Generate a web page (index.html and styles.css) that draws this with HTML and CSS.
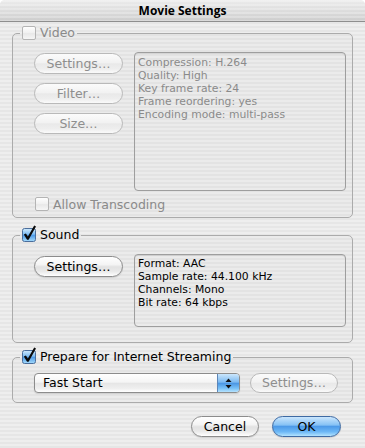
FILE: index.html
```html
<!DOCTYPE html>
<html>
<head>
<meta charset="utf-8">
<title>Movie Settings</title>
<link rel="stylesheet" href="styles.css">
</head>
<body>
<div class="window">
  <div class="titlebar">Movie Settings</div>
  <div class="content">
    <fieldset class="group">
      <legend class="legend is-disabled"><span class="cb cb-off"></span><span>Video</span></legend>
      <div class="group-body video-body">
        <div class="btn-col">
          <button class="btn btn-disabled">Settings…</button>
          <button class="btn btn-disabled">Filter…</button>
          <button class="btn btn-disabled">Size…</button>
        </div>
        <div class="info info-video is-disabled">
          <div class="info-line">Compression: H.264</div>
          <div class="info-line">Quality: High</div>
          <div class="info-line">Key frame rate: 24</div>
          <div class="info-line">Frame reordering: yes</div>
          <div class="info-line">Encoding mode: multi-pass</div>
        </div>
        <label class="check-row is-disabled"><span class="cb cb-off"></span><span>Allow Transcoding</span></label>
      </div>
    </fieldset>

    <fieldset class="group group-sound">
      <legend class="legend">
        <svg class="cb-on" width="14" height="14" viewBox="0 0 14 14" overflow="visible">
          <defs><linearGradient id="cbg1" x1="0" y1="0" x2="0" y2="1"><stop offset="0" stop-color="#d2ebfd"/><stop offset="0.45" stop-color="#7dbcf2"/><stop offset="0.5" stop-color="#4a98e6"/><stop offset="1" stop-color="#a6dcfc"/></linearGradient></defs>
          <rect x="0.5" y="0.5" width="13" height="13" rx="2" fill="url(#cbg1)" stroke="#4b6e9c"/>
          <path d="M1.8 6.6 L3.9 5.4 L5.9 8.6 L12.2 -2.6 L14 -1.6 L6.6 11.8 L5.1 11.8 Z" fill="#0a0a0a"/>
        </svg>
        <span>Sound</span>
      </legend>
      <div class="group-body sound-body">
        <div class="btn-col">
          <button class="btn">Settings…</button>
        </div>
        <div class="info info-sound">
          <div class="info-line">Format: AAC</div>
          <div class="info-line">Sample rate: 44.100 kHz</div>
          <div class="info-line">Channels: Mono</div>
          <div class="info-line">Bit rate: 64 kbps</div>
        </div>
      </div>
    </fieldset>

    <fieldset class="group group-stream">
      <legend class="legend">
        <svg class="cb-on" width="14" height="14" viewBox="0 0 14 14" overflow="visible">
          <defs><linearGradient id="cbg2" x1="0" y1="0" x2="0" y2="1"><stop offset="0" stop-color="#d2ebfd"/><stop offset="0.45" stop-color="#7dbcf2"/><stop offset="0.5" stop-color="#4a98e6"/><stop offset="1" stop-color="#a6dcfc"/></linearGradient></defs>
          <rect x="0.5" y="0.5" width="13" height="13" rx="2" fill="url(#cbg2)" stroke="#4b6e9c"/>
          <path d="M1.8 6.6 L3.9 5.4 L5.9 8.6 L12.2 -2.6 L14 -1.6 L6.6 11.8 L5.1 11.8 Z" fill="#0a0a0a"/>
        </svg>
        <span>Prepare for Internet Streaming</span>
      </legend>
      <div class="group-body stream-body">
        <div class="popup">
          <span class="popup-label">Fast Start</span>
          <span class="popup-arrows">
            <svg width="7" height="11" viewBox="0 0 7 11"><path d="M3.5 0.5 L6.5 4 L0.5 4 Z" fill="#111"/><path d="M0.5 7 L6.5 7 L3.5 10.5 Z" fill="#111"/></svg>
          </span>
        </div>
        <button class="btn btn-disabled btn-stream">Settings…</button>
      </div>
    </fieldset>
  </div>
  <div class="actions">
    <button class="btn btn-cancel">Cancel</button>
    <button class="btn btn-ok">OK</button>
  </div>
</div>
</body>
</html>
```
FILE: styles.css
```css
html, body {
  margin: 0;
  padding: 0;
  background: #ffffff;
}

body {
  font-family: "DejaVu Sans", "Open Sans", sans-serif;
  font-size: 12.5px;
  color: #000;
}

.window {
  width: 365px;
  height: 448px;
  overflow: hidden;
  display: flex;
  flex-direction: column;
  border-radius: 5px 5px 0 0;
  background: repeating-linear-gradient(to bottom, #eeeeee 0, #eeeeee 2px, #e6e6e6 2px, #e6e6e6 4px);
}

.titlebar {
  height: 21px;
  line-height: 21px;
  text-align: center;
  font-family: "Open Sans", "DejaVu Sans", sans-serif;
  font-weight: 700;
  font-size: 12px;
  border-bottom: 1px solid #8e8e8e;
  background:
    repeating-linear-gradient(to bottom, rgba(255,255,255,0.25) 0, rgba(255,255,255,0.25) 2px, rgba(0,0,0,0) 2px, rgba(0,0,0,0) 4px),
    linear-gradient(to bottom, #ececec 0%, #dadada 60%, #cdcdcd 100%);
}

.content {
  padding-top: 3px;
  display: flex;
  flex-direction: column;
}

.group {
  margin: 0 12px;
  padding: 0;
  min-width: 0;
  border: 1px solid #ababab;
  border-radius: 5px;
  background: rgba(0, 0, 0, 0.012);
}

.group-sound { margin-top: 9px; }
.group-stream { margin-top: 6px; }

.legend {
  margin-left: 7px;
  padding: 0 2px;
  height: 16px;
  display: flex;
  align-items: center;
  gap: 4px;
  font-size: 12.5px;
  line-height: 16px;
}

.is-disabled { color: #8a8a8a; }

.cb {
  display: inline-block;
  box-sizing: border-box;
  width: 14px;
  height: 14px;
  flex: none;
}

.cb-off {
  border: 1px solid #b4b4b4;
  border-radius: 2px;
  background: linear-gradient(to bottom, #fefefe, #f0f0f0 50%, #e8e8e8 55%, #f6f6f6);
}

.cb-on { flex: none; display: block; }

.group-body {
  padding: 11px 6px 6px 21px;
}

.video-body {
  display: grid;
  grid-template-columns: 89px 212px;
  column-gap: 11px;
}

.btn-col {
  display: flex;
  flex-direction: column;
  gap: 9px;
  padding-top: 1px;
}

.sound-body {
  display: grid;
  grid-template-columns: 89px 212px;
  column-gap: 11px;
  padding-bottom: 15px;
}

.sound-body .btn-col { padding-top: 2px; }

.btn {
  box-sizing: border-box;
  height: 21px;
  width: 89px;
  padding: 0;
  margin: 0;
  font-family: inherit;
  font-size: 12.5px;
  line-height: 19px;
  color: #000;
  border: 1px solid #8c8c8c;
  border-radius: 11px;
  background: linear-gradient(to bottom, #ffffff 0%, #f4f4f4 40%, #e2e2e2 52%, #e9e9e9 75%, #ffffff 100%);
  box-shadow: 0 1px 1px rgba(0, 0, 0, 0.12);
  text-align: center;
}

.btn-disabled {
  color: #8e8e8e;
  border-color: #b9b9b9;
  background: linear-gradient(to bottom, #fbfbfb 0%, #f2f2f2 45%, #e9e9e9 52%, #eeeeee 78%, #fafafa 100%);
  box-shadow: none;
}

.info {
  box-sizing: border-box;
  border: 1px solid #9e9e9e;
  border-radius: 4px;
  box-shadow: inset 0 1px 1px rgba(0, 0, 0, 0.1);
  font-size: 10.8px;
  padding: 3px 3px;
}

.info-line {
  height: 13px;
  line-height: 13px;
  white-space: nowrap;
}

.info-video { height: 139px; }
.info-sound { height: 73px; padding-top: 2px; }

.check-row {
  grid-column: 1 / -1;
  margin-top: 6px;
  margin-left: 1px;
  display: flex;
  align-items: center;
  gap: 4px;
  height: 14px;
  font-size: 12.5px;
}

.stream-body {
  display: flex;
  align-items: center;
  gap: 10px;
  padding-top: 8px;
  padding-bottom: 9px;
}

.popup {
  box-sizing: border-box;
  width: 206px;
  height: 20px;
  display: flex;
  border: 1px solid #8c8c8c;
  border-radius: 4px;
  overflow: hidden;
  background: linear-gradient(to bottom, #ffffff 0%, #f5f5f5 45%, #e6e6e6 52%, #efefef 80%, #ffffff 100%);
  box-shadow: 0 1px 1px rgba(0, 0, 0, 0.12);
}

.popup-label {
  flex: 1;
  padding-left: 8px;
  line-height: 18px;
  font-size: 12.5px;
}

.popup-arrows {
  width: 21px;
  display: flex;
  align-items: center;
  justify-content: center;
  border-left: 1px solid #5d86b8;
  background: linear-gradient(to bottom, #cbe6fc 0%, #7cbaf1 45%, #4b97e4 52%, #79c2f7 80%, #b6e2fd 100%);
}

.btn-stream { width: 88px; height: 20px; line-height: 18px; }

.actions {
  display: flex;
  justify-content: flex-end;
  gap: 13px;
  padding-right: 24px;
  margin-top: 13px;
}

.btn-cancel { width: 68px; }

.btn-ok {
  width: 69px;
  border-color: #3e6aa3;
  background: linear-gradient(to bottom, #cbe6fd 0%, #86c2f5 42%, #4d9ae8 50%, #6db8f6 78%, #b3e3fe 100%);
}
```
